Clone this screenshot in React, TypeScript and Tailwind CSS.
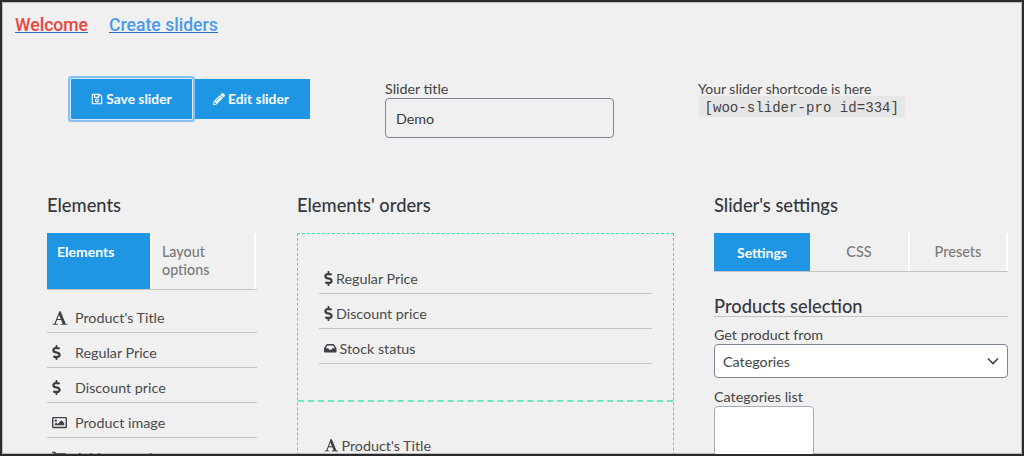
import { FaDollarSign, FaInbox, FaPencilAlt, FaRegImage, FaRegSave, FaShoppingCart } from "react-icons/fa";
import type { ReactNode } from "react";

const lato = "font-['Lato','Liberation_Sans',sans-serif]";

function SerifA({ size }: { size: number }) {
  return (
    <svg width={size} height={size} viewBox="0 0 1792 1792" fill="currentColor">
      <path d="M789 559l-170 450q33 0 136.5 2t160.5 2q19 0 57-2-87-203-184-452zm-725 1105l2-79q23-7 56-12.5t57-10.5 49.5-14.5 44.5-29 31-50.5l237-616 280-724h128q8 14 11 21l205 480q33 78 106 257.5t114 274.5q15 34 58 144.5t72 168.5q20 45 35 57 19 15 88 29.5t84 20.5q6 38 6 57 0 5-.5 13.5t-.5 12.5q-63 0-190-8t-191-8q-76 0-215 7t-178 8q0-43 4-78l131-28q1 0 12.5-2.5t15.5-3.5 14.5-4.5 15-6.5 11-8 9-11 2.5-14q0-16-31-96.5t-72-177.5-42-100l-450-2q-26 58-76.5 195.5t-50.5 162.5q0 22 14 37.5t43.5 24.5 48.5 13.5 57 8.5 41 4q1 19 1 58 0 9-2 27-58 0-174.5-10t-174.5-10q-8 0-26.5 4t-21.5 4q-80 14-188 14z" />
    </svg>
  );
}

const Dollar = () => <FaDollarSign className="h-[15px] w-[9px]" />;

function ElementRow({ icon, label }: { icon: ReactNode; label: string }) {
  return (
    <div className="flex h-[35px] items-center border-b border-[#c4c4c4] pt-[5px] text-[14.3px] text-[#4a4a4a]">
      <span className="w-[28px] pl-[5px] text-[#3f3f46]">{icon}</span>
      {label}
    </div>
  );
}

function OrderRow({ icon, label }: { icon: ReactNode; label: string }) {
  return (
    <div className="flex h-[35px] items-center gap-[3px] border-b border-[#c4c4c4] pl-[5px] pt-[5px] text-[14.3px] text-[#4a4a4a]">
      <span className="text-[#3f3f46]">{icon}</span>
      {label}
    </div>
  );
}

export default function App() {
  return (
    <div className={`h-[456px] w-[1024px] overflow-hidden border-2 border-[#2a2a2a] bg-[#f0f0f0] shadow-[inset_0_0_0_1px_#bdbdbd] ${lato}`}>
      <div className="flex gap-[21px] pl-[13px] pt-[12px] font-['Roboto',sans-serif] text-[17.6px] font-medium leading-[22px] underline">
        <a className="text-[#e8473f] decoration-[#2a6fc0]">Welcome</a>
        <a className="text-[#4a9be8] decoration-[#2a6fc0]">Create sliders</a>
      </div>

      <div className="flex pl-[69px] pt-[43px]">
        <div className="flex h-[40px] w-[239px] text-[13.8px] font-bold text-white">
          <button className="z-10 flex w-[121px] items-center justify-center gap-[3px] rounded-[1px] bg-[#1e96e4] shadow-[0_0_0_1px_#d5e9fa,0_0_0_3px_#86c0f0]">
            <FaRegSave className="text-[12px]" /> Save slider
          </button>
          <button className="flex flex-1 items-center justify-center gap-[3px] bg-[#1e96e4]">
            <FaPencilAlt className="text-[12px]" /> Edit slider
          </button>
        </div>

        <div className="ml-[75px] w-[229px]">
          <div className="pt-[1px] text-[14.3px] leading-[18px] text-[#444]">Slider title</div>
          <div className="flex h-[40px] items-center rounded-[4px] border border-[#7b8594] pl-[10px] pt-[2px] text-[14.3px] text-[#3a3a3a]">Demo</div>
        </div>

        <div className="ml-[84px]">
          <div className="text-[14px] leading-[19px] text-[#444]">Your slider shortcode is here</div>
          <code className="-mt-[2px] ml-[1px] block w-fit bg-[#e6e6e6] px-[5.5px] pt-[3px] font-['Liberation_Mono',monospace] text-[14.1px] leading-[18px] text-[#444]">[woo-slider-pro id=334]</code>
        </div>
      </div>

      <div className="flex pl-[45px] pt-[55px]">
        <section className="w-[210px]">
          <h2 className="text-[18.3px] font-medium leading-[24px] text-[#34383e]">Elements</h2>
          <div className="mt-[16px] flex h-[57px] border-b border-[#c4c4c4] text-[14px] leading-[18px]">
            <div className="w-[103px] bg-[#1e96e4] pl-[10px] pt-[10px] font-bold text-white">Elements</div>
            <div className="w-[106px] border-x-2 border-white pl-[10px] pt-[10px] text-[14.3px] font-medium text-[#7a7a7a]">Layout<br />options</div>
          </div>
          <div className="mt-[8px]">
            <ElementRow icon={<SerifA size={16} />} label="Product's Title" />
            <ElementRow icon={<Dollar />} label="Regular Price" />
            <ElementRow icon={<Dollar />} label="Discount price" />
            <ElementRow icon={<FaRegImage size={15} />} label="Product image" />
            <ElementRow icon={<FaShoppingCart size={14} />} label="Add to cart button" />
          </div>
        </section>

        <section className="ml-[40px] w-[377px]">
          <h2 className="text-[18.3px] font-medium leading-[24px] text-[#34383e]">Elements' orders</h2>
          <div className="mt-[16px] border border-dashed border-[#3fe0a8]">
            <div className="h-[168px] border-b-2 border-dashed border-[#6ce8bc] px-[21px] pt-[25px]">
              <OrderRow icon={<Dollar />} label="Regular Price" />
              <OrderRow icon={<Dollar />} label="Discount price" />
              <OrderRow icon={<FaInbox size={12.5} />} label="Stock status" />
            </div>
            <div className="h-[167px] px-[21px] pt-[24px]">
              <OrderRow icon={<SerifA size={14.5} />} label="Product's Title" />
            </div>
          </div>
        </section>

        <section className="ml-[40px] w-[294px]">
          <h2 className="text-[18.3px] font-medium leading-[24px] text-[#34383e]">Slider's settings</h2>
          <div className="mt-[16px] flex h-[39px] border-b border-[#c4c4c4] text-[14.5px] font-medium">
            <div className="flex w-[96px] items-center justify-center bg-[#1e96e4] text-[14px] font-bold text-white">Settings</div>
            <div className="flex w-[100px] items-center justify-center border-r-2 border-white text-[#7a7a7a]">CSS</div>
            <div className="flex w-[98px] items-center justify-center border-r-2 border-white text-[#7a7a7a]">Presets</div>
          </div>
          <h3 className="mt-[24px] border-b border-[#c4c4c4] text-[18.3px] font-medium leading-[20px] text-[#34383e]">Products selection</h3>
          <div className="mt-[9px] text-[14.3px] leading-[18px] text-[#444]">Get product from</div>
          <div className="flex h-[34px] items-center justify-between rounded-[4px] border border-[#7b8594] bg-white px-[8px] text-[14.3px] text-[#444]">
            <span className="pt-[1px]">Categories</span>
            <svg width="12" height="8" viewBox="0 0 12 8" fill="none" stroke="#444" strokeWidth="1.6"><path d="M1 1.5l5 5 5-5" /></svg>
          </div>
          <div className="mt-[10px] text-[14.3px] leading-[18px] text-[#444]">Categories list</div>
          <div className="h-[80px] w-[100px] rounded-[4px] border border-[#a6adb8] bg-white" />
        </section>
      </div>
    </div>
  );
}
